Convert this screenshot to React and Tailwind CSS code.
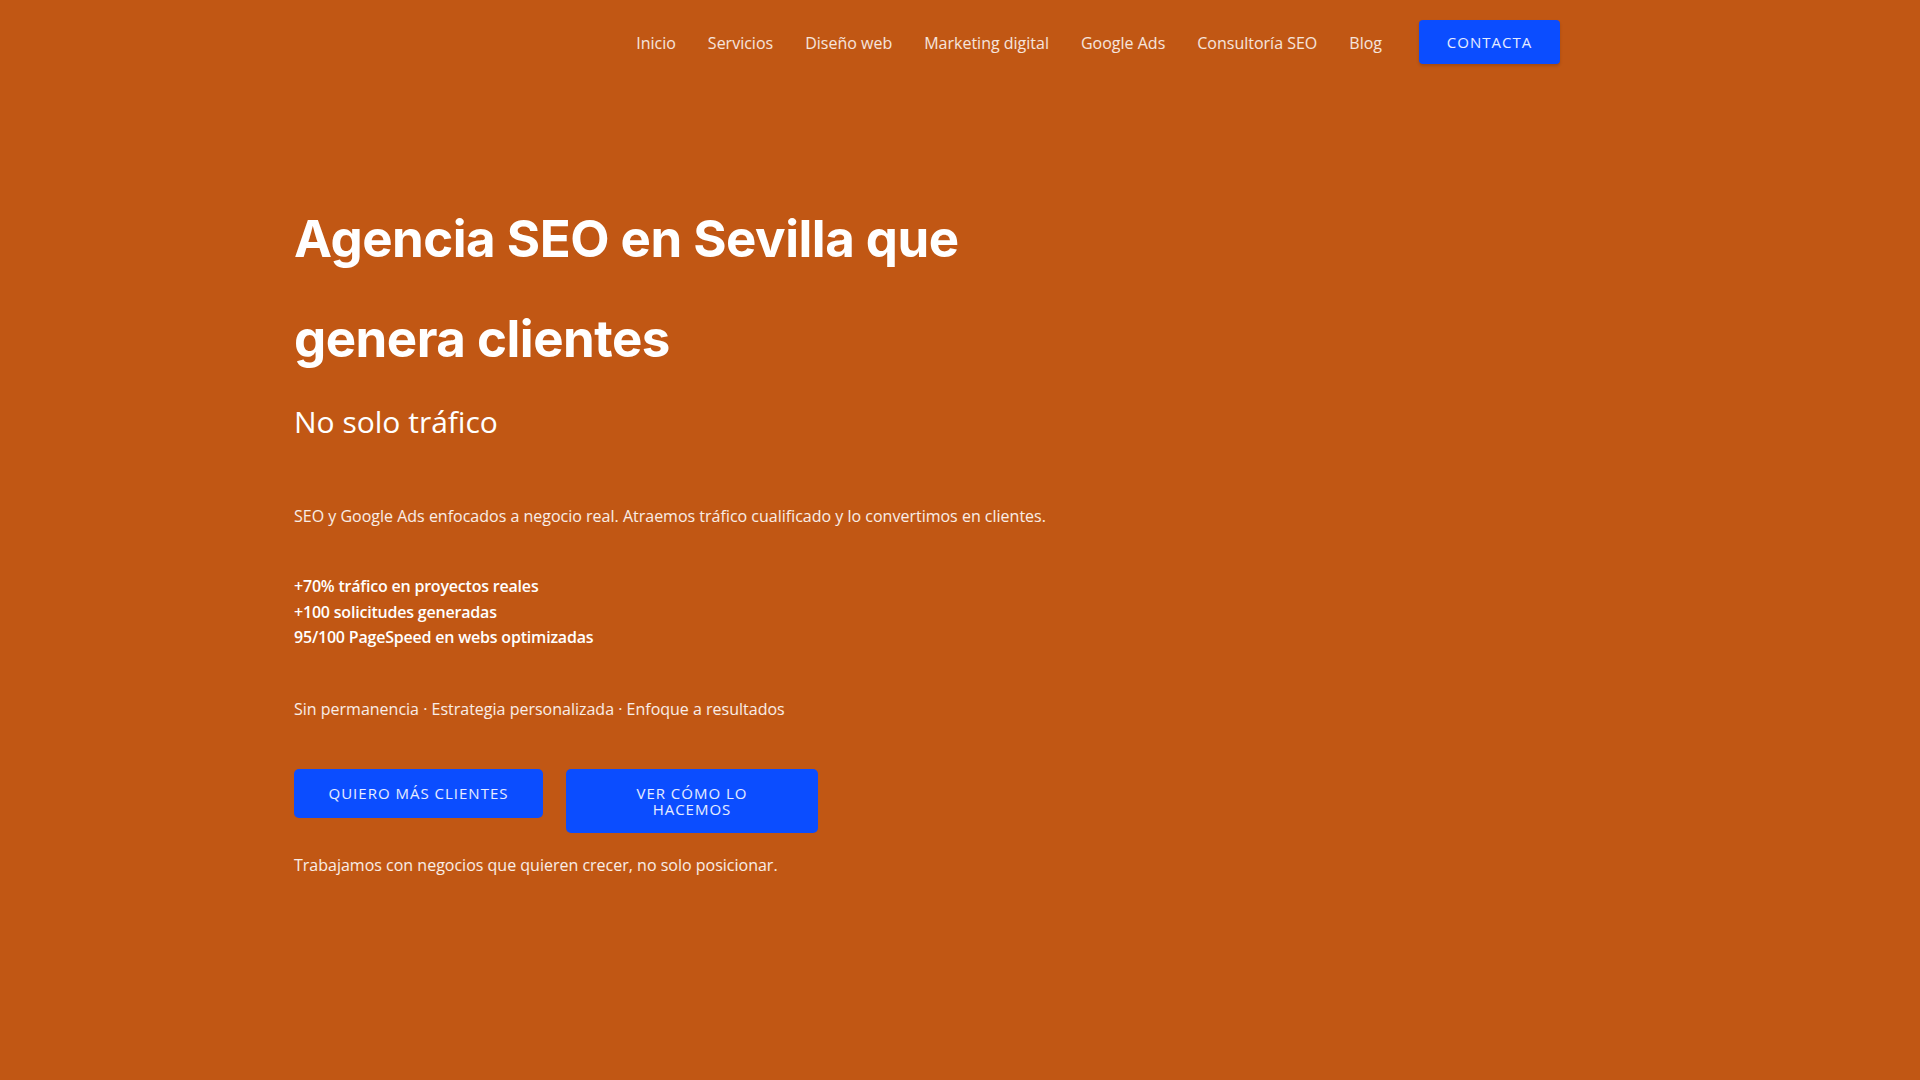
const navLinks = [
  "Inicio",
  "Servicios",
  "Diseño web",
  "Marketing digital",
  "Google Ads",
  "Consultoría SEO",
  "Blog",
];

const stats = [
  "+70% tráfico en proyectos reales",
  "+100 solicitudes generadas",
  "95/100 PageSpeed en webs optimizadas",
];

const body = { fontFamily: '"Open Sans", "Liberation Sans", sans-serif' };
const display = { fontFamily: 'Inter, "Open Sans", sans-serif' };

export default function App() {
  return (
    <div className="min-h-screen w-full bg-[#c15714] text-white" style={body}>
      <header className="flex h-[86px] items-center justify-end pr-[360px]">
        <nav className="flex items-center gap-[32px]">
          {navLinks.map((link) => (
            <a key={link} href="#" className="text-[16px] text-white/85">
              {link}
            </a>
          ))}
        </nav>
        <a
          href="#"
          className="ml-[37px] -mt-[2px] flex h-[44px] w-[141px] items-center justify-center rounded-[4px] bg-[#0b4dff] text-[15px] uppercase tracking-[1px] text-white/90 shadow-[0_2px_3px_rgba(0,0,0,0.15)]"
        >
          Contacta
        </a>
      </header>

      <main className="pl-[294px] pb-[200px]">
        <h1
          className="mt-[103px] text-[51px] font-bold leading-[100px] tracking-[-0.5px] text-white"
          style={display}
        >
          Agencia SEO en Sevilla que
          <br />
          genera clientes
        </h1>

        <h2 className="mt-[13px] text-[30px] font-medium leading-[40px] text-white">
          No solo tráfico
        </h2>

        <p className="mt-[62px] text-[16px] leading-[24px] text-white/90">
          SEO y Google Ads enfocados a negocio real. Atraemos tráfico cualificado y lo
          convertimos en clientes.
        </p>

        <ul className="mt-[46px] text-[16px] font-semibold leading-[25.5px] tracking-[-0.2px] text-white">
          {stats.map((s) => (
            <li key={s}>{s}</li>
          ))}
        </ul>

        <p className="mt-[46px] text-[16px] leading-[24px] text-white/90">
          Sin permanencia · Estrategia personalizada · Enfoque a resultados
        </p>

        <div className="mt-[48px] flex items-start gap-[23px]">
          <a
            href="#"
            className="flex w-[249px] items-center justify-center rounded-[5px] bg-[#0b4dff] py-[16.5px] text-center text-[15px] uppercase leading-[16px] tracking-[1px] text-white/90"
          >
            Quiero más clientes
          </a>
          <a
            href="#"
            className="flex w-[252px] items-center justify-center rounded-[5px] bg-[#0b4dff] py-[16px] text-center text-[15px] uppercase leading-[16px] tracking-[1px] text-white/90"
          >
            Ver cómo lo
            <br />
            hacemos
          </a>
        </div>

        <p className="mt-[20px] text-[16px] leading-[24px] text-white/90">
          Trabajamos con negocios que quieren crecer, no solo posicionar.
        </p>
      </main>
    </div>
  );
}
